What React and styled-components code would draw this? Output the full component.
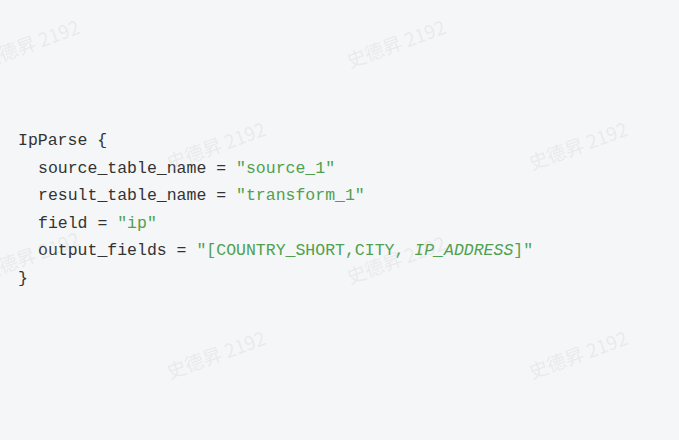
import React from 'react'
import styled, { createGlobalStyle } from 'styled-components'

const GlobalStyle = createGlobalStyle`
  html, body {
    margin: 0;
    padding: 0;
    background: #f5f6f7;
  }
`

const marks = [
  { x: -14, y: 46 },
  { x: 352, y: 46 },
  { x: 172, y: 148 },
  { x: 534, y: 148 },
  { x: -14, y: 258 },
  { x: 352, y: 262 },
  { x: 172, y: 357 },
  { x: 534, y: 357 },
]

const App = () => (
  <Page>
    <GlobalStyle />
    <Code>
      <Line>IpParse {'{'}</Line>
      <Line indent>
        source_table_name = <Str>"source_1"</Str>
      </Line>
      <Line indent>
        result_table_name = <Str>"transform_1"</Str>
      </Line>
      <Line indent>
        field = <Str>"ip"</Str>
      </Line>
      <Line indent>
        output_fields = <Str>"[COUNTRY_SHORT,CITY, <em>IP_ADDRESS</em>]"</Str>
      </Line>
      <Line>{'}'}</Line>
    </Code>
    {marks.map((m, i) => (
      <Watermark key={i} style={{ left: m.x, top: m.y }}>
        史德昇 2192
      </Watermark>
    ))}
  </Page>
)

const Page = styled.div`
  position: relative;
  width: 679px;
  height: 440px;
  overflow: hidden;
  background: #f5f6f7;
  box-sizing: border-box;
  padding: 127px 18px 0;
`

const Code = styled.pre`
  margin: 0;
  font-family: 'Liberation Mono', 'DejaVu Sans Mono', monospace;
  font-size: 16.5px;
  line-height: 27.6px;
  color: #333333;
`

const Line = styled.div`
  padding-left: ${props => (props.indent ? '20px' : '0')};
  white-space: pre;
`

const Str = styled.span`
  color: #4fa14f;

  em {
    font-style: italic;
  }
`

const Watermark = styled.div`
  position: absolute;
  width: 100px;
  height: 28px;
  font-family: 'Noto Sans CJK SC', 'Liberation Sans', sans-serif;
  font-size: 19px;
  line-height: 28px;
  white-space: nowrap;
  color: rgba(180, 184, 190, 0.2);
  transform: rotate(-20deg);
  transform-origin: left bottom;
  pointer-events: none;
  user-select: none;
`

export default App
